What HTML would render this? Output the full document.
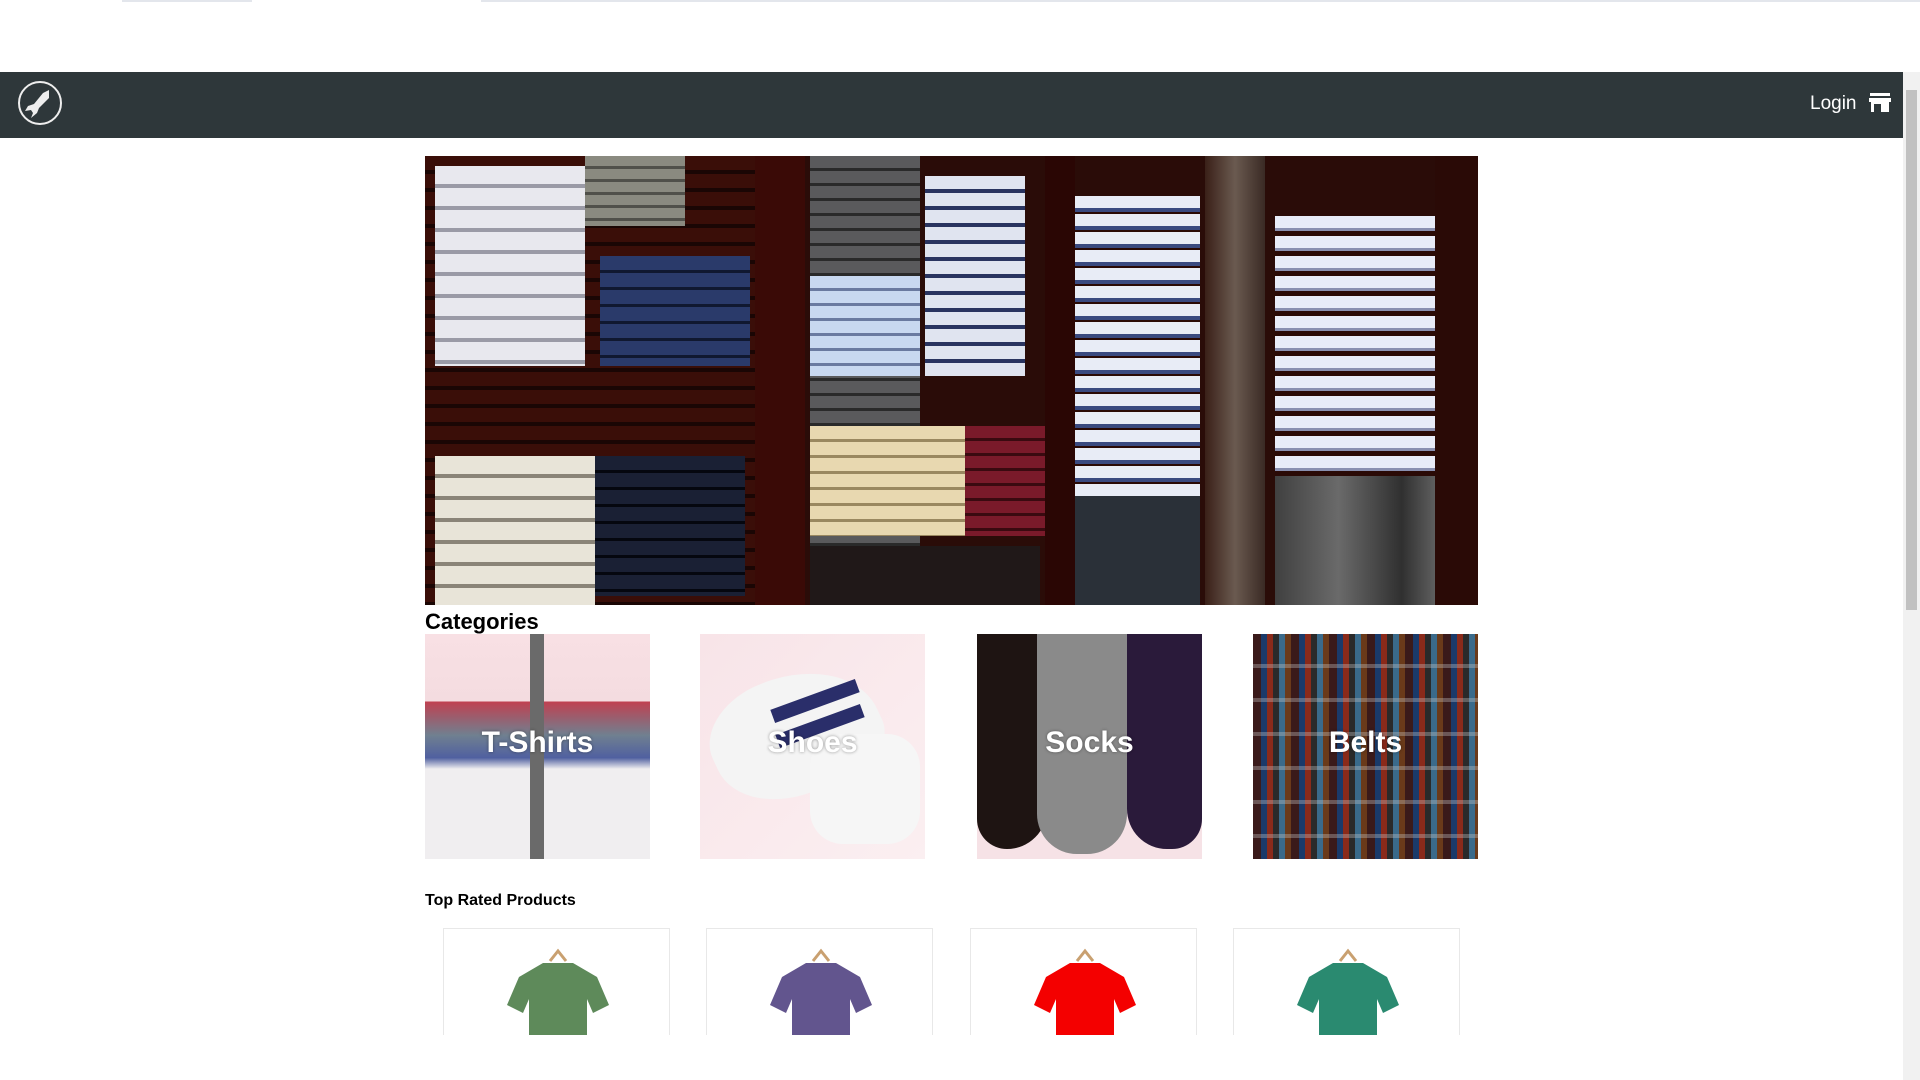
<!DOCTYPE html>
<html><head><meta charset="utf-8"><style>
*{margin:0;padding:0;box-sizing:border-box}
body{width:1920px;height:1080px;overflow:hidden;background:#fff;font-family:"Liberation Sans",sans-serif;position:relative}
.topline{position:absolute;top:0;height:2px;background:#e3e6ec}
nav{position:absolute;left:0;top:72px;width:1903px;height:66px;background:#2e373a}
.sb{position:absolute;right:0;top:72px;width:17px;height:1008px;background:#f1f1f1}
.sb i{position:absolute;left:3px;top:18px;width:11px;height:520px;background:#c1c1c1}
.login{position:absolute;left:1810px;top:21px;color:#fff;font-size:19px}
.hero{position:absolute;left:425px;top:156px;width:1053px;height:449px;background:#2a0c08;overflow:hidden}
.sh{position:absolute}
h2{position:absolute;left:425px;top:609px;font-size:22px;font-weight:bold}
.cat{position:absolute;top:634px;width:225px;height:225px;overflow:hidden}
.cat span{position:absolute;left:0;right:0;top:92px;text-align:center;color:#fff;font-size:30px;font-weight:bold;text-shadow:0 0 3px rgba(0,0,0,.4)}
h3{position:absolute;left:425px;top:892px;font-size:16px;font-weight:bold}
.card{position:absolute;top:928px;width:227px;height:107px;border:1px solid #e8e8e8;border-bottom:none;overflow:hidden}
.tee{position:absolute;left:58px;top:18px;width:112px;height:90px}
</style></head><body>
<div class="topline" style="left:122px;width:130px"></div>
<div class="topline" style="left:481px;width:1439px"></div>
<nav>
<svg style="position:absolute;left:17px;top:8px" width="46" height="46" viewBox="0 0 46 46"><circle cx="23" cy="23" r="21" fill="none" stroke="#eee" stroke-width="2"/><path d="M32 10 L26 13 L17 24 L11 26 L8 31 L14 30 L16 33 L14 38 L20 33 L22 28 L32 18 Z" fill="#eee"/></svg>
<div class="login">Login</div>
<svg style="position:absolute;left:1869px;top:21px" width="22" height="20" viewBox="0 0 22 20"><rect x="1" y="0" width="20" height="3" fill="#fff"/><path d="M0 5h22v4H0z" fill="#fff"/><path d="M2 9h18v10H2z" fill="#fff"/><rect x="5" y="11" width="7" height="8" fill="#2e373a"/></svg>
</nav>
<div class="sb"><i></i></div>
<div class="hero">
<div class="sh" style="left:0;top:0;width:330px;height:449px;background:repeating-linear-gradient(180deg,#3a0e08 0 14px,#1a0604 14px 18px)"></div>
<div class="sh" style="left:10px;top:10px;width:150px;height:200px;background:repeating-linear-gradient(180deg,#e8e8ee 0 18px,#9a9aa6 18px 22px)"></div>
<div class="sh" style="left:160px;top:0;width:100px;height:70px;background:repeating-linear-gradient(180deg,#8a8a80 0 10px,#50504a 10px 13px)"></div>
<div class="sh" style="left:175px;top:100px;width:150px;height:110px;background:repeating-linear-gradient(180deg,#2a3a6a 0 14px,#101830 14px 17px)"></div>
<div class="sh" style="left:10px;top:300px;width:160px;height:149px;background:repeating-linear-gradient(180deg,#e8e4d8 0 18px,#8a8478 18px 22px)"></div>
<div class="sh" style="left:170px;top:300px;width:150px;height:140px;background:repeating-linear-gradient(180deg,#1a2034 0 14px,#05070f 14px 17px)"></div>
<div class="sh" style="left:330px;top:0;width:50px;height:449px;background:#3a0a06"></div>
<div class="sh" style="left:385px;top:0;width:110px;height:449px;background:repeating-linear-gradient(180deg,#5a5a5c 0 12px,#2a2a2a 12px 15px)"></div>
<div class="sh" style="left:385px;top:120px;width:110px;height:100px;background:repeating-linear-gradient(180deg,#c8d8f0 0 12px,#6a7aa0 12px 15px)"></div>
<div class="sh" style="left:385px;top:270px;width:180px;height:110px;background:repeating-linear-gradient(180deg,#e8d8b0 0 13px,#9a8860 13px 16px)"></div>
<div class="sh" style="left:500px;top:20px;width:100px;height:200px;background:repeating-linear-gradient(180deg,#e0e4f0 0 13px,#2a3460 13px 17px)"></div>
<div class="sh" style="left:540px;top:270px;width:80px;height:110px;background:repeating-linear-gradient(180deg,#7a1a2a 0 12px,#3a0a10 12px 15px)"></div>
<div class="sh" style="left:385px;top:390px;width:230px;height:59px;background:#201818"></div>
<div class="sh" style="left:620px;top:0;width:30px;height:449px;background:#2a0604"></div>
<div class="sh" style="left:650px;top:40px;width:125px;height:300px;background:repeating-linear-gradient(180deg,#e8ecf6 0 12px,#3a4a80 12px 16px,#2a0a06 16px 18px)"></div>
<div class="sh" style="left:650px;top:340px;width:125px;height:109px;background:#2a3038"></div>
<div class="sh" style="left:780px;top:0;width:60px;height:449px;background:linear-gradient(90deg,#3a2018,#6a5a50,#3a2a24)"></div>
<div class="sh" style="left:850px;top:60px;width:160px;height:260px;background:repeating-linear-gradient(180deg,#e8ecf8 0 12px,#8a90b0 12px 15px,#2a0a06 15px 20px)"></div>
<div class="sh" style="left:850px;top:320px;width:190px;height:129px;background:linear-gradient(90deg,#404040,#6a6a6a,#303030,#888)"></div>
<div class="sh" style="left:1010px;top:0;width:43px;height:449px;background:#2a0a06"></div>
</div>
<h2>Categories</h2>
<div class="cat" style="left:425px;background:linear-gradient(180deg,#f8e0e4 0,#f4dce0 30%,transparent 30%),linear-gradient(180deg,#c04050 30%,#708090 45%,#5060a0 55%,#f0eef0 60%,#f0eef0 100%)"><div style="position:absolute;left:105px;top:0;width:14px;height:225px;background:#6a6a6a"></div><span>T-Shirts</span></div>
<div class="cat" style="left:700px;background:linear-gradient(135deg,#f8e4e8,#fbeff1)"><div style="position:absolute;left:10px;top:40px;width:170px;height:120px;border-radius:40% 60% 30% 50%;background:#f4f4f4;transform:rotate(-25deg)"></div><div style="position:absolute;left:70px;top:60px;width:90px;height:14px;background:#2a2e6a;transform:rotate(-20deg)"></div><div style="position:absolute;left:75px;top:85px;width:90px;height:14px;background:#2a2e6a;transform:rotate(-20deg)"></div><div style="position:absolute;left:110px;top:100px;width:110px;height:110px;border-radius:30%;background:#f6f6f6"></div><span>Shoes</span></div>
<div class="cat" style="left:977px;background:#f6e2e6"><div style="position:absolute;left:0;top:0;width:70px;height:215px;background:#1e1412;border-radius:0 0 40px 30px"></div><div style="position:absolute;left:60px;top:0;width:90px;height:220px;background:#8a8a8a;border-radius:0 0 40px 40px"></div><div style="position:absolute;left:150px;top:0;width:75px;height:215px;background:#2a1a3a;border-radius:0 0 30px 40px"></div><span>Socks</span></div>
<div class="cat" style="left:1253px;background:repeating-linear-gradient(90deg,#3a1a1a 0 8px,#1a3a6a 8px 14px,#8a2a1a 14px 20px,#2a2a2a 20px 26px,#3a6a8a 26px 32px,#6a3a1a 32px 38px)"><div style="position:absolute;inset:0;background:repeating-linear-gradient(180deg,transparent 0 30px,rgba(200,200,200,.35) 30px 34px)"></div><span>Belts</span></div>
<h3>Top Rated Products</h3>
<div class="card" style="left:443px"><svg class="tee" viewBox="0 0 106 90"><path d="M45 14 L53 4 L61 14" stroke="#c9a070" stroke-width="3" fill="none"/><path d="M38 16 L68 16 L92 30 L104 58 L88 66 L82 52 L82 90 L24 90 L24 52 L18 66 L2 58 L14 30 Z" fill="#5e8a5a"/></svg></div>
<div class="card" style="left:706px"><svg class="tee" viewBox="0 0 106 90"><path d="M45 14 L53 4 L61 14" stroke="#c9a070" stroke-width="3" fill="none"/><path d="M38 16 L68 16 L92 30 L104 58 L88 66 L82 52 L82 90 L24 90 L24 52 L18 66 L2 58 L14 30 Z" fill="#62558e"/></svg></div>
<div class="card" style="left:970px"><svg class="tee" viewBox="0 0 106 90"><path d="M45 14 L53 4 L61 14" stroke="#c9a070" stroke-width="3" fill="none"/><path d="M38 16 L68 16 L92 30 L104 58 L88 66 L82 52 L82 90 L24 90 L24 52 L18 66 L2 58 L14 30 Z" fill="#f40000"/></svg></div>
<div class="card" style="left:1233px"><svg class="tee" viewBox="0 0 106 90"><path d="M45 14 L53 4 L61 14" stroke="#c9a070" stroke-width="3" fill="none"/><path d="M38 16 L68 16 L92 30 L104 58 L88 66 L82 52 L82 90 L24 90 L24 52 L18 66 L2 58 L14 30 Z" fill="#2a8a70"/></svg></div>
</body></html>
